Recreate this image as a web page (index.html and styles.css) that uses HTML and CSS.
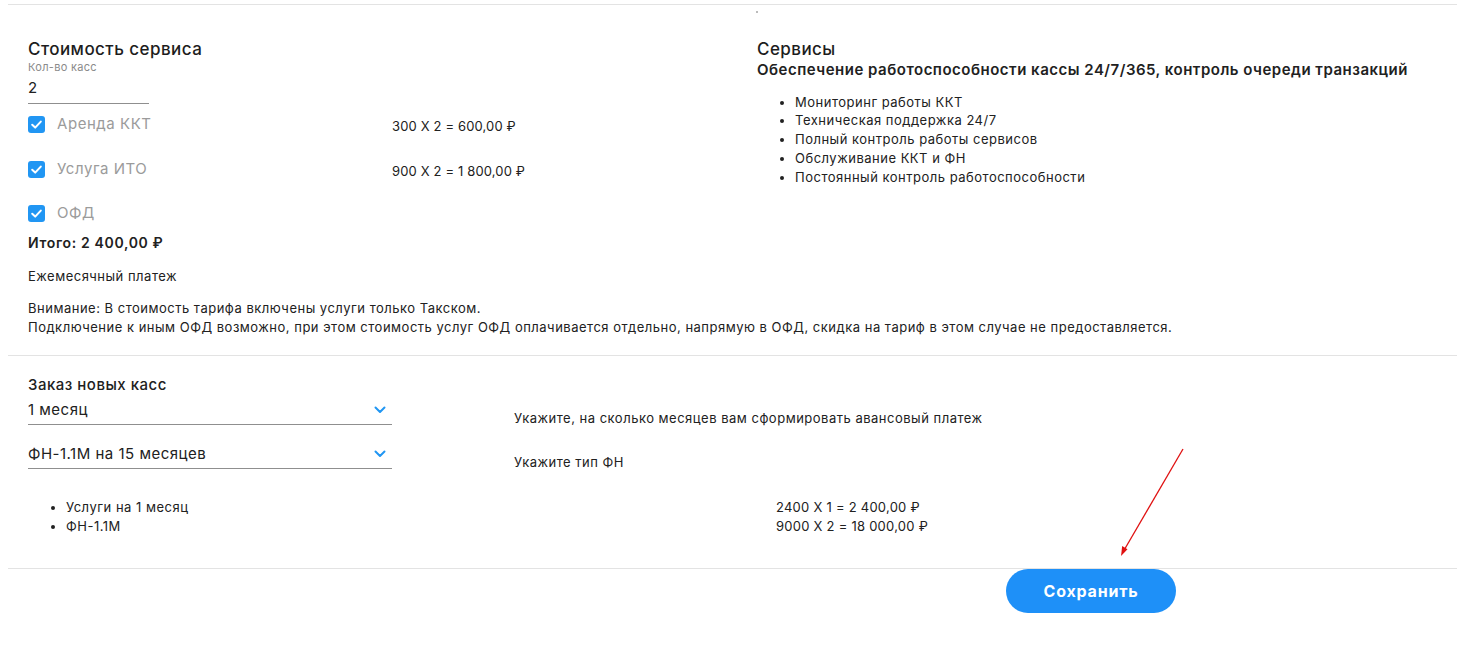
FILE: index.html
```html
<!DOCTYPE html>
<html lang="ru">
<head>
<meta charset="utf-8">
<title>Стоимость сервиса</title>
<link rel="stylesheet" href="styles.css">
</head>
<body>
<div class="page">
  <span class="stray-dot"></span>
  <section class="cost">
    <div class="cost-left">
      <h3 class="title">Стоимость сервиса</h3>
      <div class="field">
        <div class="field-label">Кол-во касс</div>
        <div class="field-input">2</div>
      </div>
      <div class="check-row first">
        <div class="check"><span class="box"><svg viewBox="0 0 17 17" width="17" height="17"><path d="M4.2 8.8 L7.2 11.6 L12.8 5.6" fill="none" stroke="#fff" stroke-width="2" stroke-linecap="round" stroke-linejoin="round"/></svg></span><span class="check-label">Аренда ККТ</span></div>
        <div class="price">300 X 2 = 600,00 ₽</div>
      </div>
      <div class="check-row">
        <div class="check"><span class="box"><svg viewBox="0 0 17 17" width="17" height="17"><path d="M4.2 8.8 L7.2 11.6 L12.8 5.6" fill="none" stroke="#fff" stroke-width="2" stroke-linecap="round" stroke-linejoin="round"/></svg></span><span class="check-label">Услуга ИТО</span></div>
        <div class="price">900 X 2 = 1 800,00 ₽</div>
      </div>
      <div class="check-row">
        <div class="check"><span class="box"><svg viewBox="0 0 17 17" width="17" height="17"><path d="M4.2 8.8 L7.2 11.6 L12.8 5.6" fill="none" stroke="#fff" stroke-width="2" stroke-linecap="round" stroke-linejoin="round"/></svg></span><span class="check-label">ОФД</span></div>
        <div class="price"></div>
      </div>
      <div class="total">Итого: 2 400,00 ₽</div>
    </div>
    <div class="cost-right">
      <h3 class="title">Сервисы</h3>
      <div class="subtitle">Обеспечение работоспособности кассы 24/7/365, контроль очереди транзакций</div>
      <ul class="services">
        <li>Мониторинг работы ККТ</li>
        <li>Техническая поддержка 24/7</li>
        <li>Полный контроль работы сервисов</li>
        <li>Обслуживание ККТ и ФН</li>
        <li>Постоянный контроль работоспособности</li>
      </ul>
    </div>
    <div class="cost-notes">
      <p class="monthly">Ежемесячный платеж</p>
      <p class="notice">Внимание: В стоимость тарифа включены услуги только Такском.<br>Подключение к иным ОФД возможно, при этом стоимость услуг ОФД оплачивается отдельно, напрямую в ОФД, скидка на тариф в этом случае не предоставляется.</p>
    </div>
  </section>

  <section class="order">
    <h3 class="order-title">Заказ новых касс</h3>
    <div class="select-row first">
      <div class="select"><span>1 месяц</span><svg class="chev" viewBox="0 0 12 8" width="12" height="8"><path d="M1.5 1.5 L6 6 L10.5 1.5" fill="none" stroke="#2196f3" stroke-width="2" stroke-linecap="round" stroke-linejoin="round"/></svg></div>
      <div class="hint">Укажите, на сколько месяцев вам сформировать авансовый платеж</div>
    </div>
    <div class="select-row">
      <div class="select"><span>ФН-1.1М на 15 месяцев</span><svg class="chev" viewBox="0 0 12 8" width="12" height="8"><path d="M1.5 1.5 L6 6 L10.5 1.5" fill="none" stroke="#2196f3" stroke-width="2" stroke-linecap="round" stroke-linejoin="round"/></svg></div>
      <div class="hint">Укажите тип ФН</div>
    </div>
    <div class="summary">
      <ul class="items">
        <li>Услуги на 1 месяц</li>
        <li>ФН-1.1М</li>
      </ul>
      <div class="amounts">
        <div>2400 X 1 = 2 400,00 ₽</div>
        <div>9000 X 2 = 18 000,00 ₽</div>
      </div>
    </div>
  </section>

  <footer class="actions">
    <button class="save" type="button">Сохранить</button>
  </footer>

  <svg class="annotation" width="80" height="120" viewBox="0 0 80 120">
    <line x1="73" y1="9" x2="13" y2="112" stroke="#e01010" stroke-width="1.3"/>
    <path d="M11 116 L12.2 106 L17.5 109.2 Z" fill="#e01010"/>
  </svg>
</div>
</body>
</html>
```

FILE: styles.css
```css
* { box-sizing: border-box; }

html, body {
  margin: 0;
  padding: 0;
  background: #fff;
}

body {
  font-family: Inter, "Open Sans", "Liberation Sans", sans-serif;
  color: #212121;
  font-size: 13px;
  letter-spacing: 0.5px;
}

.page {
  position: relative;
  margin-left: 8px;
  padding-top: 4px;
}

.stray-dot {
  position: absolute;
  left: 748px;
  top: 11px;
  width: 2px;
  height: 2px;
  background: #bbb;
}

/* ---------- cost section ---------- */
.cost {
  border-top: 1px solid #e3e3e3;
  border-bottom: 1px solid #e3e3e3;
  padding: 34px 0 0 20px;
  display: grid;
  grid-template-columns: 729px 1fr;
}

.title {
  margin: 0;
  font-size: 17px;
  line-height: 20px;
  font-weight: 500;
  color: #1d1d1d;
  letter-spacing: 0.45px;
}

.field-label {
  font-size: 11px;
  line-height: 14px;
  color: #8a8a8a;
  margin-top: 1px;
  letter-spacing: 0.3px;
}

.field-input {
  width: 121px;
  font-size: 15px;
  line-height: 20px;
  padding: 4px 0 5px;
  border-bottom: 1px solid #8f8f8f;
}

.check-row {
  display: grid;
  grid-template-columns: 364px 1fr;
  align-items: center;
  height: 17px;
  margin-top: 28px;
}

.check-row.first { margin-top: 9px; }

.check {
  display: flex;
  align-items: center;
  gap: 12px;
}

.box {
  width: 17px;
  height: 17px;
  border-radius: 3px;
  background: #2196f3;
  display: flex;
}

.check-label {
  font-size: 15px;
  line-height: 20px;
  color: #9b9b9b;
  letter-spacing: 0.55px;
}

.price {
  font-size: 13px;
  line-height: 18px;
  padding-top: 4px;
  letter-spacing: 0.15px;
}

.total {
  margin-top: 14px;
  font-size: 14px;
  line-height: 18px;
  font-weight: 600;
  letter-spacing: 0.65px;
}

.subtitle {
  margin-top: 2px;
  font-size: 15px;
  line-height: 18px;
  font-weight: 600;
  letter-spacing: 0.5px;
}

.services {
  margin: 13.5px 0 0;
  padding-left: 38px;
  font-size: 13px;
  line-height: 18.75px;
}

.cost-notes {
  grid-column: 1 / -1;
  padding-bottom: 18px;
}

.monthly {
  margin: 15px 0 0;
  line-height: 18px;
}

.notice {
  margin: 14px 0 0;
  line-height: 19px;
}

/* ---------- order section ---------- */
.order {
  padding: 20px 0 32px 20px;
  border-bottom: 1px solid #e3e3e3;
}

.order-title {
  margin: 0;
  font-size: 15px;
  line-height: 18px;
  font-weight: 500;
  letter-spacing: 0.5px;
}

.select-row {
  display: flex;
  align-items: flex-end;
  margin-top: 13px;
}

.select-row.first { margin-top: 0; }

.select {
  width: 364px;
  display: flex;
  align-items: center;
  justify-content: space-between;
  padding: 7px 6px 5px 0;
  font-size: 15px;
  line-height: 18px;
  border-bottom: 1px solid #8f8f8f;
}

.hint {
  margin-left: 122px;
  margin-bottom: -2px;
  line-height: 18px;
}

.summary {
  display: grid;
  grid-template-columns: 748px 1fr;
  margin-top: 29px;
  line-height: 19px;
}

.items {
  margin: 0;
  padding-left: 38px;
}

.amounts { letter-spacing: 0.25px; }

/* ---------- footer ---------- */
.actions {
  padding-left: 998px;
  height: 70px;
}

.save {
  display: block;
  width: 170px;
  height: 44px;
  border: none;
  border-radius: 22px;
  background: #1e90f8;
  color: #fff;
  font-family: inherit;
  font-size: 16px;
  font-weight: 700;
  letter-spacing: 0.8px;
  cursor: pointer;
}

.annotation {
  position: absolute;
  left: 1102px;
  top: 440px;
}
```
